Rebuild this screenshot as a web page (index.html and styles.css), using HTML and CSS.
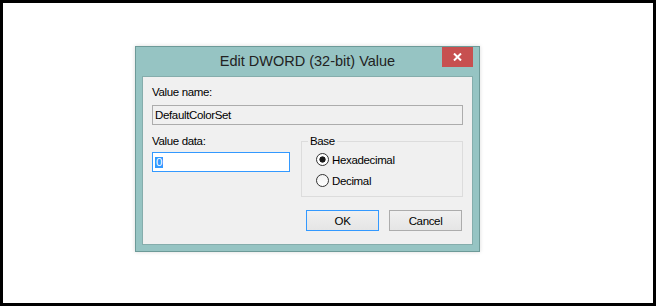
FILE: index.html
```html
<!DOCTYPE html>
<html lang="en">
<head>
    <meta charset="UTF-8">
    <title>Edit DWORD (32-bit) Value</title>
    <link rel="stylesheet" href="styles.css">
</head>
<body>
    <div class="screen">
        <div class="dialog">
            <div class="titlebar">
                <span class="title">Edit DWORD (32-bit) Value</span>
                <button class="close-btn" aria-label="Close">
                    <svg width="9" height="8" viewBox="0 0 9 8">
                        <path d="M1 0.5 L8 7.5 M8 0.5 L1 7.5" stroke="#fff" stroke-width="2" fill="none"/>
                    </svg>
                </button>
            </div>

            <div class="content">
                <div class="field-label">Value name:</div>
                <div class="textbox readonly">DefaultColorSet</div>

                <div class="data-row">
                    <div class="data-col">
                        <div class="field-label">Value data:</div>
                        <div class="textbox focused"><span class="selection">0</span></div>
                    </div>

                    <fieldset class="base-group">
                        <legend>Base</legend>
                        <div class="radio-row"><span class="radio checked"></span>Hexadecimal</div>
                        <div class="radio-row"><span class="radio"></span>Decimal</div>
                    </fieldset>
                </div>

                <div class="button-row">
                    <button class="btn default">OK</button>
                    <button class="btn">Cancel</button>
                </div>
            </div>
        </div>
    </div>
</body>
</html>
```

FILE: styles.css
```css
* {
    box-sizing: border-box;
}

body {
    margin: 0;
    background: #fff;
}

.screen {
    width: 656px;
    height: 306px;
    border: 3px solid #000;
    background: #fff;
    padding: 43px 0 0 132px;
}

/* window frame */
.dialog {
    width: 345px;
    height: 206px;
    border: 1px solid #6d9a98;
    background: #96c4c3;
    padding: 0 6px 6px;
    display: flex;
    flex-direction: column;
    box-shadow: 0 0 4px rgba(0, 0, 0, 0.15);
}

.titlebar {
    position: relative;
    height: 29px;
    line-height: 29px;
    text-align: center;
    font-family: 'Liberation Sans', Arial, sans-serif;
    font-size: 14.5px;
    color: #222;
}

.close-btn {
    position: absolute;
    top: 0;
    right: 0;
    width: 31px;
    height: 20px;
    border: none;
    padding: 0;
    background: #c75050;
    display: flex;
    align-items: center;
    justify-content: center;
}

/* client area */
.content {
    flex: 1;
    background: #f0f0f0;
    border: 1px solid #85adac;
    padding: 8px 9px 0;
    font-family: 'Liberation Sans', Arial, sans-serif;
    font-size: 11.5px;
    letter-spacing: -0.35px;
    color: #000;
}

.field-label {
    line-height: 15px;
}

.textbox {
    height: 20px;
    margin-top: 5px;
    border: 1px solid #acacac;
    padding: 0 2px;
    line-height: 18px;
    white-space: nowrap;
}

.textbox.readonly {
    background: #f0f0f0;
}

.textbox.focused {
    margin-top: 3px;
    background: #fff;
    border-color: #3399ff;
}

.selection {
    display: inline-block;
    background: #3399ff;
    color: #fff;
    line-height: 11px;
    padding: 0 1px;
    vertical-align: middle;
}

.data-row {
    margin-top: 9px;
    display: grid;
    grid-template-columns: 138px 162px;
    gap: 11px;
    align-items: start;
}

.base-group {
    margin: 0;
    min-width: 0;
    padding: 0 0 5px 0;
    border: 1px solid #dcdcdc;
}

.base-group legend {
    margin-left: 6px;
    padding: 0 2px;
    line-height: 15px;
}

.radio-row {
    height: 21px;
    padding-left: 14px;
    display: flex;
    align-items: center;
}

.radio {
    width: 13px;
    height: 13px;
    margin-right: 3px;
    border: 1px solid #333;
    border-radius: 50%;
    background: linear-gradient(#f2f2f2, #fff);
}

.radio.checked {
    background: radial-gradient(circle, #1a1a1a 0 2.8px, #fff 3.4px);
}

.button-row {
    margin-top: 13px;
    padding-right: 1px;
    display: flex;
    justify-content: flex-end;
    gap: 10px;
}

.btn {
    width: 73px;
    height: 21px;
    padding: 0;
    border: 1px solid #acacac;
    background: linear-gradient(#f0f0f0, #e5e5e5);
    font-family: 'Liberation Sans', Arial, sans-serif;
    font-size: 11.5px;
    letter-spacing: -0.35px;
    color: #000;
}

.btn.default {
    border-color: #3399ff;
}
```
